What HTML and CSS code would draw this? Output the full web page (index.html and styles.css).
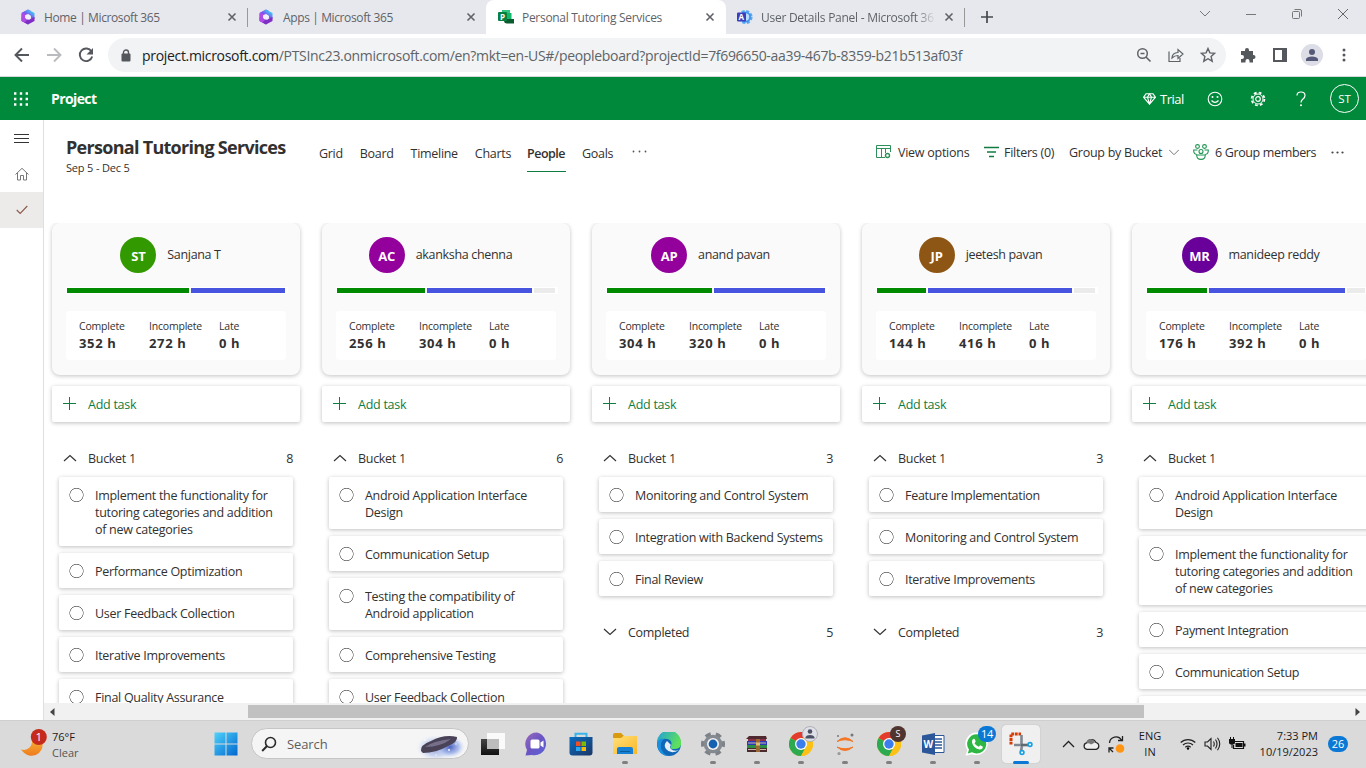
FILE: index.html
```html
<!DOCTYPE html>
<html lang="en">
<head>
<meta charset="utf-8">
<title>Personal Tutoring Services</title>
<link rel="stylesheet" href="styles.css">
</head>
<body>
<svg class="defs" width="0" height="0">
  <defs>
    <linearGradient id="mg1" x1="0" y1="1" x2="1" y2="0"><stop offset="0" stop-color="#e04be8"/><stop offset=".45" stop-color="#7b55ee"/><stop offset=".8" stop-color="#3fc8f5"/></linearGradient>
    <linearGradient id="mg2" x1="0" y1="0" x2="1" y2="1"><stop offset="0" stop-color="#c95cf5"/><stop offset="1" stop-color="#4a2bb0"/></linearGradient>
    <linearGradient id="win" x1="0" y1="0" x2="1" y2="1"><stop offset="0" stop-color="#4fd2fb"/><stop offset="1" stop-color="#0067cf"/></linearGradient>
    <linearGradient id="moon" x1="0" y1="0" x2="0" y2="1"><stop offset="0" stop-color="#f9b93c"/><stop offset="1" stop-color="#ee7a1c"/></linearGradient>
    <linearGradient id="chat" x1="0" y1="0" x2="1" y2="1"><stop offset="0" stop-color="#9a6bb8"/><stop offset=".5" stop-color="#6a55c4"/><stop offset="1" stop-color="#5b63d8"/></linearGradient>
    <linearGradient id="fold" x1="0" y1="0" x2="1" y2="1"><stop offset="0" stop-color="#ffe07a"/><stop offset="1" stop-color="#fbb724"/></linearGradient>
    <linearGradient id="store" x1="0" y1="0" x2="1" y2="1"><stop offset="0" stop-color="#0a6fc4"/><stop offset="1" stop-color="#1b3564"/></linearGradient>
    <linearGradient id="edge1" x1="0" y1="0" x2="1" y2=".4"><stop offset="0" stop-color="#1fa0dc"/><stop offset="1" stop-color="#5fe05a"/></linearGradient>
    <radialGradient id="glow"><stop offset="0" stop-color="#4c62c0"/><stop offset=".6" stop-color="#9fb4ea" stop-opacity=".8"/><stop offset="1" stop-color="#d6e4fa" stop-opacity="0"/></radialGradient>
    <linearGradient id="dark" x1="0" y1="0" x2="0" y2="1"><stop offset="0" stop-color="#444"/><stop offset="1" stop-color="#111"/></linearGradient>
  </defs>
  <symbol id="m365" viewBox="0 0 16 16"><path d="M8 .5 1.500 4v8L8 15.500l2-4.500-5-2V5.500L11 2z" fill="url(#mg2)"/><path d="M8 .5 14.500 4v6L11 9.500V7L8 5 5.500 6 4 8 1.500 4z" fill="url(#mg1)"/><path d="M14.500 8v4L8 15.500 2 12l-.5-3.500L5 10l3 1.500 4-2.500z" fill="#7f2fc4"/><path d="M1.500 5v7l3 1.500L7 11 5 9V5z" fill="#b04ae4"/><circle cx="8" cy="8" r="2.600" fill="#f2eefb"/></symbol>
  <symbol id="x" viewBox="0 0 10 10"><path d="m1.500 1.500 7 7m0-7-7 7" stroke="#5f6368" stroke-width="1.600"/></symbol>
  <symbol id="up" viewBox="0 0 14 8"><path d="m1 7 6-5.500L13 7" fill="none" stroke="#333" stroke-width="1.200"/></symbol>
  <symbol id="down" viewBox="0 0 14 8"><path d="m1 1 6 5.500L13 1" fill="none" stroke="#333" stroke-width="1.200"/></symbol>
  <symbol id="plus" viewBox="0 0 14 14"><path d="M6.500 0v13M0 6.500h13" stroke="#107c41"/></symbol>
  <symbol id="chrome" viewBox="0 0 24 24"><circle cx="12" cy="12" r="12" fill="#fbc116"/><path d="M12 12 1.600 6A12 12 0 0 1 22.400 6z" fill="#e33b2e"/><path d="M12 12 1.600 6A12 12 0 0 0 12 24l5-9z" fill="#2da94f"/><path d="M12 6h10.400A12 12 0 0 1 12 24l5-9z" fill="#fbc116"/><circle cx="12" cy="12" r="6" fill="#fff"/><circle cx="12" cy="12" r="4.700" fill="#3b7ded"/></symbol>
</svg>

<div class="tabs">
  <div class="tab"><svg class="fav" width="16" height="16"><use href="#m365"/></svg><span>Home | Microsoft 365</span><svg class="close" width="10" height="10"><use href="#x"/></svg></div>
  <div class="tab split"><svg class="fav" width="16" height="16"><use href="#m365"/></svg><span>Apps | Microsoft 365</span><svg class="close" width="10" height="10"><use href="#x"/></svg></div>
  <div class="tab active"><svg class="fav" width="16" height="16" viewBox="0 0 16 16"><path d="M4 1h8v4H4z" fill="#33c481"/><path d="M9 4h4.500v6H9z" fill="#10b868"/><path d="M6 10h10v4.500H9q-3 0-3-3z" fill="#0a5c30"/><rect y="3" width="9" height="9" rx="1" fill="#088040"/><text x="2" y="10.500" font-size="8" font-weight="700" fill="#fff">P</text></svg><span>Personal Tutoring Services</span><svg class="close" width="10" height="10"><use href="#x"/></svg></div>
  <div class="tab last"><svg class="fav" width="16" height="16" viewBox="0 0 16 16"><circle cx="8.500" cy="8" r="5.800" fill="none" stroke="#58aaf5" stroke-width="2.600" stroke-dasharray="3 1.555"/><circle cx="8.500" cy="8" r="4.600" fill="#b9dcfb" stroke="#3f94ee" stroke-width="1.800"/><rect y="3.500" width="9" height="9" rx="1" fill="#3a3fbd"/><text x="1.500" y="11" font-size="8" font-weight="700" fill="#fff">A</text></svg><span class="fade">User Details Panel - Microsoft 36</span><svg class="close" width="10" height="10"><use href="#x"/></svg></div>
  <svg class="newtab" width="12" height="12" viewBox="0 0 12 12"><path d="M6 0v12M0 6h12" stroke="#45484d" stroke-width="1.700"/></svg>
  <div class="winctl">
    <svg width="12" height="8" viewBox="0 0 12 8"><path d="m1 1 5 5 5-5" fill="none" stroke="#777" /></svg>
    <svg width="12" height="8" viewBox="0 0 12 8"><path d="M1 4.500h10" stroke="#777"/></svg>
    <svg width="12" height="12" viewBox="0 0 12 12"><g fill="none" stroke="#777"><rect x="1.500" y="3.500" width="7" height="7" rx="1"/><path d="M3.500 1.500H9q1.500 0 1.500 1.500v5.500"/></g></svg>
    <svg width="12" height="12" viewBox="0 0 12 12"><path d="m1 1 10 10m0-10L1 11" stroke="#666"/></svg>
  </div>
</div>

<div class="toolbar">
  <div class="nav">
    <svg width="16" height="16" viewBox="0 0 16 16"><path d="M15 8H2m6-6.500L1.500 8 8 14.500" fill="none" stroke="#54575c" stroke-width="1.900"/></svg>
    <svg width="16" height="16" viewBox="0 0 16 16"><path d="M1 8h13M8 1.500 14.500 8 8 14.500" fill="none" stroke="#b9bbbe" stroke-width="1.900"/></svg>
    <svg width="16" height="16" viewBox="0 0 16 16"><path d="M13.500 4.500A6.300 6.300 0 1 0 14.200 9.500" fill="none" stroke="#54575c" stroke-width="1.900"/><path d="M15 1v6.500H8.500z" fill="#54575c"/></svg>
  </div>
  <div class="omni">
    <svg width="10" height="13" viewBox="0 0 10 13"><rect x=".5" y="4.500" width="9" height="8" rx="1" fill="#54575c"/><path d="M2.500 5V3.500a2.500 2.500 0 0 1 5 0V5" fill="none" stroke="#54575c" stroke-width="1.400"/></svg>
    <span class="url"><b>project.microsoft.com</b>/PTSInc23.onmicrosoft.com/en?mkt=en-US#/peopleboard?projectId=7f696650-aa39-467b-8359-b21b513af03f</span>
    <svg width="16" height="16" viewBox="0 0 16 16"><circle cx="6.500" cy="6.500" r="4.800" fill="none" stroke="#5f6368" stroke-width="1.500"/><path d="m10 10 4.500 4.500M4.500 6.500h4" stroke="#5f6368" stroke-width="1.600"/></svg>
    <svg width="16" height="16" viewBox="0 0 16 16"><path d="M1 4.500V14.500h11V11M4 11q0-5 6-5.500V2.500l5 4.500-5 4.500V8.500Q6.500 8.500 4 11z" fill="none" stroke="#5f6368" stroke-width="1.200"/></svg>
    <svg width="16" height="16" viewBox="0 0 16 16"><path d="m8 1.500 1.900 4.400 4.800.4-3.600 3.200 1.100 4.700L8 11.700l-4.200 2.500 1.100-4.700L1.300 6.300l4.800-.4z" fill="none" stroke="#5f6368" stroke-width="1.400"/></svg>
  </div>
  <div class="ext">
    <svg width="16" height="16" viewBox="0 0 16 16"><path d="M1 4h4V3a2 2 0 0 1 4 0v1h4v4h.5a2 2 0 0 1 0 4H13v3.500H9.500V14a2 2 0 0 0-4 0v1.500H1V12h1a2 2 0 0 0 0-4H1z" fill="#54575c"/></svg>
    <svg width="16" height="16" viewBox="0 0 16 16"><path d="M1 1h14v14H1zm2 2v10h7V3z" fill="#54575c" fill-rule="evenodd"/></svg>
    <svg width="22" height="22" viewBox="0 0 22 22"><circle cx="11" cy="11" r="11" fill="#dcdde6"/><circle cx="11" cy="8" r="3" fill="#565a78"/><path d="M5 17v-2q1-2.500 6-2.500t6 2.500v2z" fill="#565a78"/></svg>
    <svg width="4" height="14" viewBox="0 0 4 14"><g fill="#54575c"><circle cx="2" cy="2" r="1.500"/><circle cx="2" cy="7" r="1.500"/><circle cx="2" cy="12" r="1.500"/></g></svg>
  </div>
</div>

<div class="suite">
  <svg width="14" height="14" viewBox="0 0 14 14"><path d="M0 1.500h14M0 7h14M0 12.500h14" stroke="#fff" stroke-width="2.400" stroke-dasharray="2.400 3.400"/></svg>
  <span class="app">Project</span>
  <div class="right">
    <svg width="13" height="12" viewBox="0 0 13 12"><path d="M3 .8h7l2.500 3.400-6 7-6-7zM.5 4.200h12M4.500 4.200l2 7 2-7-2-3.400z" fill="none" stroke="#fff" stroke-width="1.100"/></svg>
    <span class="trial">Trial</span>
    <svg class="smile" width="16" height="16" viewBox="0 0 16 16"><circle cx="8" cy="8" r="6.800" fill="none" stroke="#fff" stroke-width="1.100"/><circle cx="5.500" cy="6" r="1" fill="#fff"/><circle cx="10.500" cy="6" r="1" fill="#fff"/><path d="M4.500 9.500q3.500 3.800 7 0" fill="none" stroke="#fff" stroke-width="1.200"/></svg>
    <svg class="cog" width="16" height="16" viewBox="0 0 16 16"><g fill="none" stroke="#fff"><circle cx="8" cy="8" r="2.300" stroke-width="1.200"/><circle cx="8" cy="8" r="5"/><circle cx="8" cy="8" r="6.400" stroke-width="1.800" stroke-dasharray="2.800 2.227"/></g></svg>
    <svg class="help" width="10" height="16" viewBox="0 0 10 16"><path d="M1 4.500Q1 1 5 1t4 3.500Q9 6.500 7 8t-2 3.500" fill="none" stroke="#fff" stroke-width="1.200"/><circle cx="5" cy="14.300" r="1" fill="#fff"/></svg>
    <span class="me">ST</span>
  </div>
</div>

<div class="app-body">
  <div class="rail">
    <div><svg width="15" height="11" viewBox="0 0 15 11"><path d="M0 1.500h15M0 5.500h15M0 9.500h15" stroke="#333"/></svg></div>
    <div><svg width="14" height="14" viewBox="0 0 14 14"><path d="M.5 7.500 7 1.300l6.500 6.200M2.500 6v7h3V8.500h3V13h3V6" fill="none" stroke="#777"/></svg></div>
    <div class="sel"><svg width="12" height="10" viewBox="0 0 12 10"><path d="m.7 5 3.500 3.500L11.300 1" fill="none" stroke="#8a5a4c" stroke-width="1.100"/></svg></div>
  </div>
  <main>
    <header>
      <div class="title"><h1>Personal Tutoring Services</h1><p>Sep 5 - Dec 5</p></div>
      <nav class="views"><a>Grid</a><a>Board</a><a>Timeline</a><a>Charts</a><a class="on">People</a><a>Goals</a><svg width="15" height="3" viewBox="0 0 15 3"><g fill="#555"><circle cx="1.500" cy="1.500" r=".9"/><circle cx="7.500" cy="1.500" r=".9"/><circle cx="13.500" cy="1.500" r=".9"/></g></svg></nav>
      <div class="cmds">
        <svg width="15" height="14" viewBox="0 0 15 14"><g fill="none" stroke="#2f8f5b"><path d="M14.500 7V.5H.5v12H9M.5 3.500h14M5.500 3.500v9M9.500 3.500V8"/><circle cx="11.500" cy="10.500" r="2" stroke-width="1.400"/></g></svg><span class="c1">View options</span>
        <svg width="15" height="12" viewBox="0 0 15 12"><path d="M0 1.500h15M3 6h9M5 10.500h5" stroke="#107c41" stroke-width="1.300"/></svg><span class="c2">Filters (0)</span>
        <span class="c3">Group by Bucket</span><svg class="dn" width="10" height="7" viewBox="0 0 10 7"><path d="m0 .7 5 5 5-5" fill="none" stroke="#777"/></svg>
        <svg class="grp" width="16" height="16" viewBox="0 0 16 16"><g fill="none" stroke="#219653" stroke-width="1.100"><circle cx="4.500" cy="2.500" r="1.900"/><circle cx="11.500" cy="2.500" r="1.900"/><circle cx="8" cy="7.500" r="2"/><path d="M4.500 6H.7Q.5 10 4 10.500M11.500 6h3.800q.2 4-3.300 4.500M3.700 11h8.600q0 4.400-4.300 4.400T3.700 11z"/></g></svg><span class="c4">6 Group members</span>
        <svg class="more" width="13" height="3" viewBox="0 0 13 3"><g fill="#444"><circle cx="1.500" cy="1.500" r="1.100"/><circle cx="6.500" cy="1.500" r="1.100"/><circle cx="11.500" cy="1.500" r="1.100"/></g></svg>
      </div>
    </header>

    <div class="board">
      <section class="col">
        <div class="card"><div class="who"><i style="background:#339900">ST</i><span>Sanjana T</span></div>
          <div class="bar"><b class="g" style="width:122px"></b><b class="b" style="width:94px"></b></div>
          <dl><div><dt>Complete</dt><dd>352 h</dd></div><div><dt>Incomplete</dt><dd>272 h</dd></div><div><dt>Late</dt><dd>0 h</dd></div></dl></div>
        <div class="add"><svg width="14" height="14"><use href="#plus"/></svg>Add task</div>
        <div class="bucket"><svg width="14" height="8"><use href="#up"/></svg><span>Bucket 1</span><em>8</em></div>
        <ul><li>Implement the functionality for<br>tutoring categories and addition<br>of new categories</li><li>Performance Optimization</li><li>User Feedback Collection</li><li>Iterative Improvements</li><li>Final Quality Assurance</li></ul>
      </section>
      <section class="col">
        <div class="card"><div class="who"><i style="background:#93009c">AC</i><span>akanksha chenna</span></div>
          <div class="bar"><b class="g" style="width:88px"></b><b class="b" style="width:105px"></b><b class="n" style="width:21px"></b></div>
          <dl><div><dt>Complete</dt><dd>256 h</dd></div><div><dt>Incomplete</dt><dd>304 h</dd></div><div><dt>Late</dt><dd>0 h</dd></div></dl></div>
        <div class="add"><svg width="14" height="14"><use href="#plus"/></svg>Add task</div>
        <div class="bucket"><svg width="14" height="8"><use href="#up"/></svg><span>Bucket 1</span><em>6</em></div>
        <ul><li>Android Application Interface<br>Design</li><li>Communication Setup</li><li>Testing the compatibility of<br>Android application</li><li>Comprehensive Testing</li><li>User Feedback Collection</li></ul>
      </section>
      <section class="col">
        <div class="card"><div class="who"><i style="background:#93009c">AP</i><span>anand pavan</span></div>
          <div class="bar"><b class="g" style="width:105px"></b><b class="b" style="width:111px"></b></div>
          <dl><div><dt>Complete</dt><dd>304 h</dd></div><div><dt>Incomplete</dt><dd>320 h</dd></div><div><dt>Late</dt><dd>0 h</dd></div></dl></div>
        <div class="add"><svg width="14" height="14"><use href="#plus"/></svg>Add task</div>
        <div class="bucket"><svg width="14" height="8"><use href="#up"/></svg><span>Bucket 1</span><em>3</em></div>
        <ul><li>Monitoring and Control System</li><li>Integration with Backend Systems</li><li>Final Review</li></ul>
        <div class="bucket"><svg width="14" height="8"><use href="#down"/></svg><span>Completed</span><em>5</em></div>
      </section>
      <section class="col">
        <div class="card"><div class="who"><i style="background:#8e5614">JP</i><span>jeetesh pavan</span></div>
          <div class="bar"><b class="g" style="width:49px"></b><b class="b" style="width:144px"></b><b class="n" style="width:21px"></b></div>
          <dl><div><dt>Complete</dt><dd>144 h</dd></div><div><dt>Incomplete</dt><dd>416 h</dd></div><div><dt>Late</dt><dd>0 h</dd></div></dl></div>
        <div class="add"><svg width="14" height="14"><use href="#plus"/></svg>Add task</div>
        <div class="bucket"><svg width="14" height="8"><use href="#up"/></svg><span>Bucket 1</span><em>3</em></div>
        <ul><li>Feature Implementation</li><li>Monitoring and Control System</li><li>Iterative Improvements</li></ul>
        <div class="bucket"><svg width="14" height="8"><use href="#down"/></svg><span>Completed</span><em>3</em></div>
      </section>
      <section class="col">
        <div class="card"><div class="who"><i style="background:#680099">MR</i><span>manideep reddy</span></div>
          <div class="bar"><b class="g" style="width:60px"></b><b class="b" style="width:136px"></b><b class="n" style="width:18px"></b></div>
          <dl><div><dt>Complete</dt><dd>176 h</dd></div><div><dt>Incomplete</dt><dd>392 h</dd></div><div><dt>Late</dt><dd>0 h</dd></div></dl></div>
        <div class="add"><svg width="14" height="14"><use href="#plus"/></svg>Add task</div>
        <div class="bucket"><svg width="14" height="8"><use href="#up"/></svg><span>Bucket 1</span></div>
        <ul><li>Android Application Interface<br>Design</li><li>Implement the functionality for<br>tutoring categories and addition<br>of new categories</li><li>Payment Integration</li><li>Communication Setup</li><li>&nbsp;</li></ul>
      </section>
    </div>
    <div class="scroll"><svg width="5" height="8" viewBox="0 0 5 8"><path d="M4.500 0v8L0 4z" fill="#444"/></svg><div class="thumb"></div><svg width="5" height="8" viewBox="0 0 5 8"><path d="M.5 0v8L5 4z" fill="#444"/></svg></div>
  </main>
</div>

<footer class="taskbar">
  <div class="weather">
    <svg width="28" height="30" viewBox="0 0 28 30"><path d="M1 20.500q5 1.500 8.500-2T12 8l10 5q2 6-3 11-4 3.500-9 2.700T1 20.500z" fill="url(#moon)"/><circle cx="18.800" cy="8" r="8" fill="#c42b1c"/><text x="18.800" y="12.200" text-anchor="middle" font-size="11.500" fill="#fff">1</text></svg>
    <div><p>76°F</p><p class="dim">Clear</p></div>
  </div>
  <svg class="start" width="24" height="24" viewBox="0 0 24 24"><path d="M.5.5h11v11H.5zm12 0h11v11h-11zM.5 12.500h11v11H.5zm12 0h11v11h-11z" fill="url(#win)"/></svg>
  <div class="search">
    <svg width="16" height="16" viewBox="0 0 16 16"><circle cx="9.500" cy="6.500" r="5" fill="none" stroke="#2a2a2a" stroke-width="1.600"/><path d="m6 10-4.800 5" stroke="#2a2a2a" stroke-width="1.900"/></svg>
    <span>Search</span>
    <svg width="50" height="28" viewBox="0 0 50 28"><ellipse cx="20" cy="18" rx="20" ry="13" fill="url(#glow)" opacity=".6"/><ellipse cx="34" cy="17" rx="15" ry="11" fill="url(#glow)"/><path d="M5 21q-1-6 10-10Q28 4 41 7q1 5-9 9-12 7-25 7z" fill="#4a4358"/><path d="M9 17q8-6 26-8-5 4-12 6-6 2-14 2z" fill="#77708a"/><g fill="#fff"><circle cx="9" cy="10" r=".8"/><circle cx="20" cy="25" r=".7"/><circle cx="33" cy="20" r=".9"/><circle cx="40" cy="14" r=".7"/></g></svg>
  </div>
  <div class="apps">
    <div><svg width="24" height="24" viewBox="0 0 24 24"><path d="M0 7h18v16H0z" fill="url(#dark)"/><path d="M6 1h18v16H6z" fill="#fff" opacity=".85"/><path d="M6 7h12v10H6z" fill="#bdbdbd"/></svg></div>
    <div><svg width="24" height="24" viewBox="0 0 24 24"><path d="M12 .5A11.500 11.500 0 1 1 7 23L.5 23.500 2 18A11.500 11.500 0 0 1 12 .5z" fill="url(#chat)"/><rect x="5.500" y="7.500" width="9" height="9" rx="1.500" fill="#fff"/><path d="m15.500 10.500 3-2v7l-3-2z" fill="#fff"/></svg></div>
    <div><svg width="24" height="24" viewBox="0 0 24 24"><path d="M6.500 6V1.700h11V6" fill="none" stroke="#38b4ea" stroke-width="2"/><path d="M.5 5h23v15.500q0 3-3 3h-17q-3 0-3-3z" fill="url(#store)"/><path d="M7 9.500h4.500V14H7z" fill="#f25022"/><path d="M12.500 9.500H17V14h-4.500z" fill="#7fba00"/><path d="M7 15h4.500v4H7z" fill="#2aa9f0"/><path d="M12.500 15H17v4h-4.500z" fill="#ffb900"/></svg></div>
    <div class="run"><svg width="24" height="24" viewBox="0 0 24 24"><path d="M0 3q0-2 2-2h6l3 3v3H0z" fill="#d99a0e"/><path d="M0 6h8l2.500-2H24v18H0z" fill="url(#fold)"/><path d="M4 22v-5q0-2 2-2h12q2 0 2 2v5z" fill="#1580d4"/><path d="M7 19.500h10" stroke="#0a5aa0"/></svg></div>
    <div><svg width="24" height="24" viewBox="0 0 24 24"><circle cx="12" cy="12" r="12" fill="#1067b8"/><path d="M0 11A12 12 0 0 1 24 10q1 7-7 7-5 0-3-3 2-6-4-7Q4 6 0 11z" fill="url(#edge1)"/><path d="M0 12q1-6 7-5-4 3-3 9 1 5 7 8Q1 23 0 12z" fill="#1890df"/><path d="M10 9q-4 4-1 8 5 6 13 1-5 2-8-1-2-2 0-4z" fill="#e3eef6"/></svg></div>
    <div class="run"><svg width="24" height="24" viewBox="0 0 24 24"><circle cx="12" cy="12" r="10" fill="none" stroke="#7d8289" stroke-width="4" stroke-dasharray="5.500 4.972" transform="rotate(-16 12 12)"/><circle cx="12" cy="12" r="9.300" fill="#858a91"/><circle cx="12" cy="12" r="6" fill="#f2f2f2"/><circle cx="12" cy="12" r="4.400" fill="#1560b0"/></svg></div>
    <div class="run"><svg width="22" height="18" viewBox="0 0 22 18"><path d="M2 2h18v4H2z" fill="#8b3047"/><path d="M1 6h20v4H1z" fill="#2a39b5"/><path d="M1 10h20v3H1z" fill="#2c8c45"/><path d="M1 13h20v4H1z" fill="#4b2a2c"/><path d="M2 3.500h18M2 8h18M2 14.500h18" stroke="#c8b8b0"/><path d="M10 1h4v16h-4z" fill="#9a6a32"/><path d="M10 7.500h4v3h-4z" fill="#e0be70"/><path d="m0 4 3-3h17l1 3z" fill="#4e2a30"/></svg></div>
    <div class="run"><svg width="24" height="24"><use href="#chrome"/></svg><span class="mini person"><svg width="14" height="14" viewBox="0 0 14 14"><circle cx="7" cy="4.500" r="2.300" fill="#4c5164"/><path d="M2.500 11.500V10q1-2 4.500-2t4.500 2v1.500z" fill="#4c5164"/></svg></span></div>
    <div class="run"><svg width="18" height="22" viewBox="0 0 18 22"><path d="M1 8.500Q9 1 17 8.500 9 5 1 8.500zM1 14q8 7 16 0-8 3.500-16 0z" fill="#f37726" stroke="#f37726"/><circle cx="16" cy="2" r="1.500" fill="#777"/><circle cx="3" cy="20.500" r="1.600" fill="#999"/><circle cx="2" cy="3" r="1" fill="#777"/></svg></div>
    <div class="run"><svg width="24" height="24"><use href="#chrome"/></svg><span class="mini ess">S</span></div>
    <div class="run"><svg width="24" height="22" viewBox="0 0 24 22"><path d="M12 2.500h11v17H12z" fill="#fff" stroke="#2b579a"/><path d="M13 6h8M13 9h8M13 12h8M13 15h8" stroke="#2b579a" stroke-width="1.300"/><path d="M1 2.500 14 0v22L1 19.500z" fill="#2b579a"/><text x="2.500" y="14.800" font-size="10" font-weight="700" fill="#fff">W</text></svg></div>
    <div class="run"><svg width="24" height="24" viewBox="0 0 24 24"><path d="M12 .5A11.300 11.300 0 1 1 7 22.200L.5 23.700 2.300 18A11.300 11.300 0 0 1 12 .5z" fill="#fff"/><path d="M12 2.300a9.600 9.600 0 1 1-5 18L2.800 21.400 4 17.500a9.600 9.600 0 0 1 8-15.200z" fill="#2eb843"/><path d="M8 7q1.500-1 2 .8l.7 1.800-1.200 1.600q1.500 2.600 4.200 3.600l1.500-1.500 2.500 1.200q.5 3-3 3Q8.500 16.500 7 10.500 6.800 8 8 7z" fill="#fff"/></svg><span class="mini count">14</span></div>
    <div class="snip"><svg width="24" height="24" viewBox="0 0 24 24"><path d="M2 12.500V2h10" fill="none" stroke="#d83b01" stroke-width="3" stroke-dasharray="2.800 .8"/><path d="M12.500 3v11M5 13h8M13 14l-1 5" fill="none" stroke="#808890" stroke-width="2.600"/><path d="m12 13 7 0" stroke="#606870" stroke-width="2.600"/><circle cx="21" cy="12.500" r="1.900" fill="#fff" stroke="#1ba1e2" stroke-width="1.700"/><circle cx="13" cy="20.500" r="1.900" fill="#fff" stroke="#1ba1e2" stroke-width="1.700"/></svg></div>
  </div>
  <div class="tray">
    <svg width="13" height="8" viewBox="0 0 13 8"><path d="m1 7 5.500-5.500L12 7" fill="none" stroke="#222" stroke-width="1.300"/></svg>
    <svg width="17" height="12" viewBox="0 0 17 12"><path d="M4 11.300a3.300 3.300 0 0 1-.3-6.500A5 5 0 0 1 13 4.500a3.500 3.500 0 0 1 .3 6.800z" fill="#eee" stroke="#222" stroke-width="1.200"/><path d="M2 6.500Q5 4 8 6.500l4-2Q10 .8 7.500 1 4.500 1 3.700 4.500z" fill="#777"/></svg>
    <svg width="17" height="17" viewBox="0 0 17 17"><path d="M1.500 7A6.500 6.500 0 0 1 13.500 4M14.500 0v4.500H10M1 16.500V12h4.500M1.500 12.500 5 16" fill="none" stroke="#222" stroke-width="1.300"/><circle cx="12" cy="12.500" r="4.300" fill="#ff9512"/></svg>
    <div class="lang">ENG<br>IN</div>
    <svg width="16" height="12" viewBox="0 0 16 12"><g fill="none" stroke="#222" stroke-width="1.200"><path d="M.7 4.500a10.500 10.500 0 0 1 14.600 0M3 7a7.300 7.300 0 0 1 10 0M5.300 9.300a4 4 0 0 1 5.400 0"/></g><circle cx="8" cy="10.500" r="1.200"/></svg>
    <svg width="17" height="14" viewBox="0 0 17 14"><path d="M1 5h2.500L7 1.500v11L3.500 9H1zM9.500 4.500q1.500 2.500 0 5M11.500 2.500q3 4.500 0 9M13.500.8q4.500 6.200 0 12.400" fill="none" stroke="#222" stroke-width="1.100"/></svg>
    <svg width="17" height="14" viewBox="0 0 17 14"><path d="M5.500 4.500h9v7h-10V8" fill="none" stroke="#111" stroke-width="1.200"/><path d="M6.500 6h7v4h-7zM15 6.500h1.500v3H15zM0 2h6v3.500q0 2-3 2T0 5.500zM1 0h1v2H1zm3 0h1v2H4zM2.500 7h1v4h-1z" fill="#111"/></svg>
    <div class="clock">7:33 PM<br>10/19/2023</div>
    <span class="notif">26</span>
  </div>
</footer>
</body>
</html>
```

FILE: styles.css
```css
* { box-sizing: border-box; }
body { margin: 0; width: 1366px; height: 768px; overflow: hidden; display: flex; flex-direction: column; font-family: "Open Sans", "Noto Sans", sans-serif; font-size: 12px; color: #323130; background: #fff; }
.defs { position: absolute; }
svg { flex: none; display: block; }
p, h1, ul, dl, dd { margin: 0; padding: 0; }

.tabs { height: 34px; flex: none; display: flex; align-items: center; background: #e7e8ed; color: #5f6368; }
.tab { height: 34px; width: 247px; display: flex; align-items: center; padding-left: 20px; white-space: nowrap; letter-spacing: -.38px; }
.tab span { margin-left: 8px; flex: 1; overflow: hidden; }
.tab .close { margin-right: 10px; }
.tab.split { width: 239px; padding-left: 11px; background: linear-gradient(#999, #999) 0 8px / 1px 19px no-repeat; }
.tab.split span { margin-left: 9px; }
.tab.active { width: 240px; padding-left: 12px; background: #fff; border-radius: 8px 8px 0 0; }
.tab.active .close { margin-right: 11px; }
.tab.active span { letter-spacing: -.3px; }
.tab.last { width: 239px; padding-left: 11px; background: linear-gradient(#999, #999) 238px 8px / 1px 19px no-repeat; }
.tab.last .close { margin: 0 11px 0 8px; }
.fade { letter-spacing: -.26px; -webkit-mask-image: linear-gradient(90deg, #000 155px, transparent 175px); mask-image: linear-gradient(90deg, #000 155px, transparent 175px); }
.newtab { margin-left: 16px; }
.winctl { margin-left: auto; width: 150px; display: flex; align-items: center; justify-content: space-between; margin-right: 17px; margin-bottom: 6px; }

.toolbar { height: 43px; flex: none; display: flex; align-items: center; border-bottom: 1px solid #d5d7da; }
.nav { width: 108px; padding-left: 14px; display: flex; gap: 16px; }
.omni { width: 1118px; height: 34px; border-radius: 17px; background: #f1f3f4; padding: 0 10px 0 13px; display: flex; align-items: center; gap: 16px; }
.url { flex: 1; margin-left: -5px; font-size: 14px; letter-spacing: -.315px; color: #5f6368; white-space: nowrap; }
.url b { font-weight: 400; color: #202124; }
.ext { display: flex; align-items: center; padding-left: 14px; gap: 15px; }
.ext svg:nth-child(2) { margin-left: 1px; margin-right: -2px; }
.ext svg:last-child { margin-left: 4px; }

.suite { height: 43px; flex: none; background: #00893a; color: #fff; display: flex; align-items: center; padding: 0 7px 0 14px; }
.app { margin-left: 23px; font-size: 14px; font-weight: 700; letter-spacing: -.6px; }
.right { margin-left: auto; display: flex; align-items: center; }
.trial { width: 25px; margin: 0 22px 0 4px; font-size: 13px; letter-spacing: -.5px; }
.cog { margin-left: 27px; }
.help { margin-left: 30px; }
.me { margin-left: 24px; width: 29px; height: 29px; border: 1px solid #fff; border-radius: 50%; display: grid; place-items: center; font-size: 11.500px; }

.app-body { height: 600px; flex: none; display: flex; }
.rail { width: 44px; flex: none; border-right: 1px solid #e1dfdd; }
.rail div { height: 36px; display: grid; place-items: center; }
.rail .sel { background: #ecebe9; }
main { flex: 1; min-width: 0; display: flex; flex-direction: column; overflow: hidden; }
header { height: 103px; flex: none; display: flex; padding-left: 22px; }
.title { width: 253px; padding-top: 15px; white-space: nowrap; }
h1 { font-size: 18px; line-height: 25px; font-weight: 700; letter-spacing: -.71px; }
.title p { font-size: 11px; line-height: 16px; letter-spacing: -.17px; }
.views { display: flex; height: 52px; padding-top: 24px; line-height: 19px; font-size: 12.500px; letter-spacing: -.3px; gap: 17px; }
.views .on { border-bottom: 1px solid #107c41; font-weight: 600; letter-spacing: -.5px; width: 39px; margin-left: -1px; }
.views a:last-of-type { margin-left: -1px; }
.views svg { margin: 6px 0 0 2px; }
.cmds { margin-left: auto; height: 20px; margin-top: 22px; display: flex; align-items: center; font-size: 12.500px; letter-spacing: -.26px; white-space: nowrap; padding-right: 22px; }
.c1 { width: 72px; margin: 0 14px 0 7px; }
.c2 { width: 51px; margin: 0 14px 0 5px; }
.c3 { width: 93px; margin-right: 7px; }
.c4 { width: 101px; margin: 0 15px 0 6px; letter-spacing: -.36px; }
.grp { margin-left: 14px; }

.board { flex: 1; min-height: 0; padding-left: 8px; display: flex; gap: 22px; overflow: hidden; }
.col { width: 248px; flex: none; }
.card { height: 152px; border-radius: 8px; background: #fafafa; box-shadow: 0 1px 4px rgba(0,0,0,.24); padding: 14px 14px 0; }
.who { height: 36px; display: flex; align-items: center; justify-content: center; gap: 11px; padding-right: 11px; font-size: 12.500px; letter-spacing: -.33px; }
.who span { margin-top: -2px; }
.who i { width: 36px; height: 36px; border-radius: 50%; display: grid; place-items: center; color: #fff; font: 700 13px "Open Sans", sans-serif; letter-spacing: -.2px; padding-top: 1px; }
.bar { margin: 14px -2px 0 0; height: 7px; background: #fff; padding: 1px; display: flex; gap: 2px; }
.bar b { height: 5px; }
.g { background: #008a00; }
.b { background: #4654e0; }
.n { background: #ebebeb; }
dl { margin-top: 17px; width: 220px; height: 49px; background: #fff; border-radius: 3px; padding: 7px 0 0 13px; display: grid; grid-template-columns: 70px 70px 60px; }
dt { font-size: 10.500px; line-height: 16px; letter-spacing: -.2px; }
dd { font-size: 13px; line-height: 18px; font-weight: 700; letter-spacing: .65px; }
.add { margin-top: 11px; height: 36px; border-radius: 2px; box-shadow: 0 1px 4px rgba(0,0,0,.26); padding-left: 11px; display: flex; align-items: center; gap: 11px; color: #107c41; font-size: 12.500px; letter-spacing: -.26px; }
.bucket { margin-top: 18px; height: 37px; padding: 0 7px 0 11px; display: flex; align-items: center; font-size: 12.500px; letter-spacing: -.3px; }
.bucket svg { margin-top: -2px; }
.bucket span { margin-left: 11px; flex: 1; }
.bucket em { font-style: normal; }
ul { list-style: none; padding: 0 7px; display: grid; gap: 7px; }
li { border-radius: 2px; box-shadow: 0 1px 4px rgba(0,0,0,.26); padding: 10px 0 8px 36px; line-height: 17px; font-size: 12.500px; letter-spacing: -.29px; white-space: nowrap; background: radial-gradient(circle at 17.500px 18px, transparent 6px, #797775 6.600px 6.800px, transparent 7.400px) #fff; }

.scroll { height: 17px; flex: none; background: #f1f1f1; display: flex; align-items: center; padding: 0 6px; justify-content: space-between; }
.thumb { width: 896px; height: 13px; margin-right: 19px; background: #c1c1c1; }

.taskbar { height: 48px; flex: none; display: flex; align-items: center; background: #dadada; border-top: 1px solid #cfcfcf; color: #1b1b1b; }
.weather { width: 214px; padding-left: 20px; display: flex; gap: 4px; line-height: 16px; font-size: 11px; }
.dim { color: #555; }
.start { margin-bottom: 2px; }
.search { margin: 0 0 2px 13px; width: 218px; height: 31px; border-radius: 16px; background: #f5f5f5; border: 1px solid #c5c5c5; display: flex; align-items: center; padding: 0 2px 0 9px; color: #5e5e5e; font-size: 13px; }
.search span { margin-left: 10px; flex: 1; letter-spacing: -.1px; }
.apps { margin-left: 2px; display: flex; }
.apps > div { width: 44px; height: 48px; position: relative; display: grid; place-items: center; padding-bottom: 2px; }
.run::after { content: ""; position: absolute; left: 19px; bottom: 5px; width: 6px; height: 3px; border-radius: 2px; background: #808080; }
.mini { position: absolute; left: 23px; top: 5px; width: 16px; height: 16px; border-radius: 50%; display: grid; place-items: center; font-size: 9px; color: #fff; }
.person { background: #dfe0e8; border: 1px solid #b0b0b8; }
.ess { background: #4f3430; }
.count { left: 23px; width: 18px; height: 16px; border-radius: 8px; background: #0a78d4; font-size: 11px; letter-spacing: -.3px; }
.snip::before { content: ""; position: absolute; left: 3px; top: 4px; width: 38px; height: 38px; border-radius: 4px; background: #f0f0f0; box-shadow: 0 0 1px #999; }
.snip::after { content: ""; position: absolute; left: 14px; bottom: 5px; width: 16px; height: 3px; border-radius: 2px; background: #0a78d4; }
.snip svg { position: relative; }
.tray { margin: 0 0 1px 19px; display: flex; align-items: center; gap: 8px; font-size: 11px; line-height: 16px; }
.lang { width: 34px; text-align: center; margin: 0 5px 0 0; }
.clock { width: 67px; text-align: right; margin-left: -3px; white-space: nowrap; }
.notif { width: 20px; height: 16px; border-radius: 8px; background: #0a78d4; color: #fff; display: grid; place-items: center; margin-left: 2px; }
```
